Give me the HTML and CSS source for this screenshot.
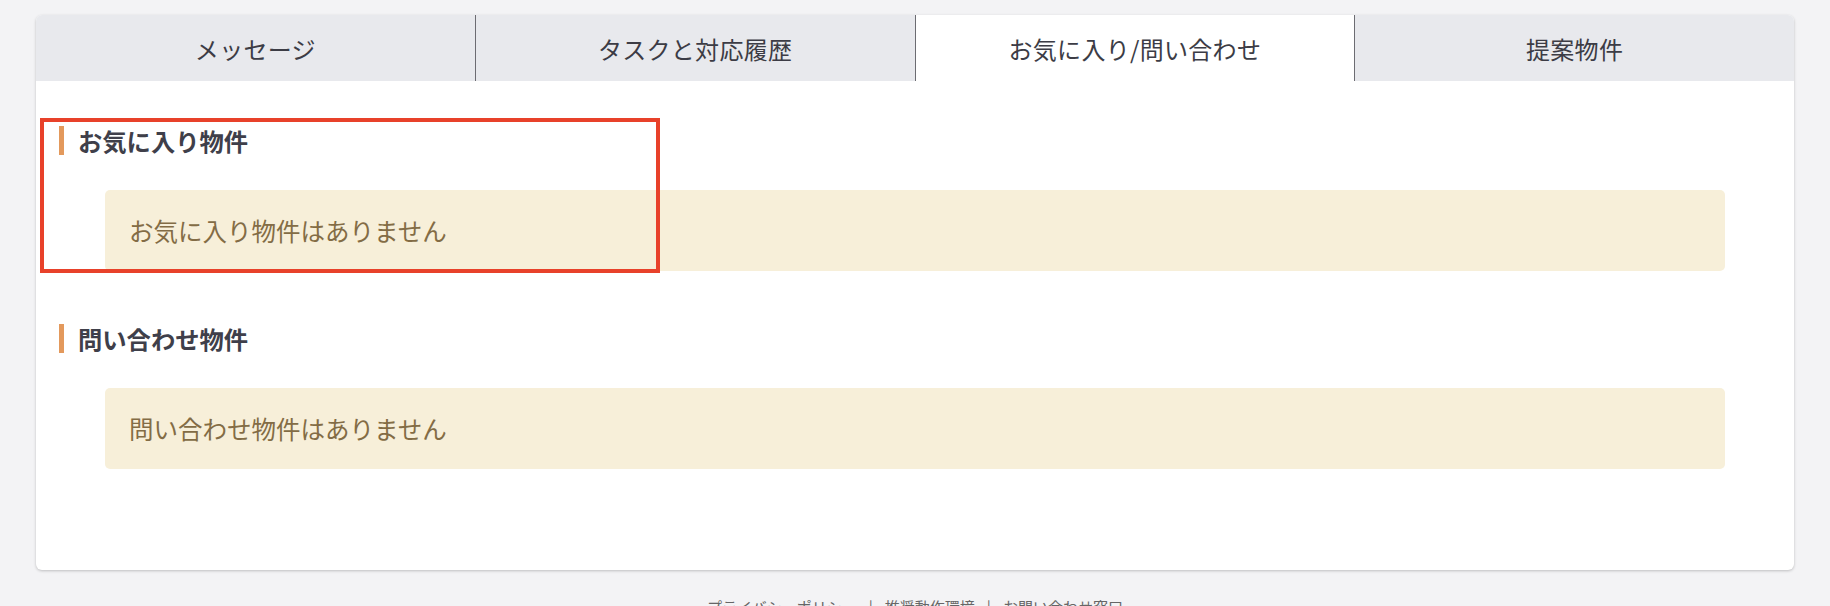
FILE: index.html
```html
<!DOCTYPE html>
<html lang="ja">
<head>
<meta charset="utf-8">
<link rel="stylesheet" href="styles.css">
</head>
<body>
<div class="page">
  <div class="card">
    <div class="tabs">
      <div class="tab">メッセージ</div>
      <div class="tab">タスクと対応履歴</div>
      <div class="tab active">お気に入り/問い合わせ</div>
      <div class="tab">提案物件</div>
    </div>
    <div class="content">
      <section class="section">
        <h2 class="heading">お気に入り物件</h2>
        <div class="notice">お気に入り物件はありません</div>
      </section>
      <section class="section second">
        <h2 class="heading">問い合わせ物件</h2>
        <div class="notice">問い合わせ物件はありません</div>
      </section>
    </div>
  </div>
  <div class="footer">
    <span>プライバシーポリシー</span><span class="sep">|</span><span>推奨動作環境</span><span class="sep">|</span><span>お問い合わせ窓口</span>
  </div>
</div>
<div class="highlight"></div>
</body>
</html>
```
FILE: styles.css
```css
html, body {
  margin: 0;
  padding: 0;
  background: #f3f3f5;
  font-family: "Noto Sans CJK JP", "Noto Sans", sans-serif;
  overflow: hidden;
}
.page {
  padding: 15px 36px 0 36px;
}
.card {
  width: 1758px;
  height: 555px;
  background: #ffffff;
  border-radius: 6px;
  box-shadow: 0 1px 3px rgba(0, 0, 0, 0.22);
  overflow: hidden;
}
.tabs {
  display: flex;
  height: 66px;
  background: #e8e9ed;
}
.tab {
  flex: 1;
  display: flex;
  align-items: center;
  justify-content: center;
  font-size: 24px;
  color: #3c3c45;
  letter-spacing: 0.3px;
}
.tab + .tab {
  border-left: 1.5px solid #6c6c72;
}
.tab.active {
  background: #ffffff;
}
.content {
  padding: 45px 69px 0 23px;
}
.section.second {
  margin-top: 53px;
}
.heading {
  margin: 0;
  border-left: 5px solid #e3995c;
  padding-left: 14px;
  font-size: 24.3px;
  line-height: 29px;
  height: 29px;
  font-weight: bold;
  color: #3f3f4a;
}
.notice {
  margin: 35px 0 0 46px;
  height: 81px;
  display: flex;
  align-items: center;
  padding-left: 24px;
  background: #f7efd9;
  border-radius: 5px;
  font-size: 24.5px;
  color: #836c45;
}
.footer {
  margin-top: 27px;
  display: flex;
  justify-content: center;
  gap: 12px;
  font-size: 15px;
  line-height: 20px;
  color: #666;
}
.highlight {
  position: absolute;
  left: 40px;
  top: 118px;
  width: 612px;
  height: 147px;
  border: 4px solid #e8412a;
  pointer-events: none;
}
```
